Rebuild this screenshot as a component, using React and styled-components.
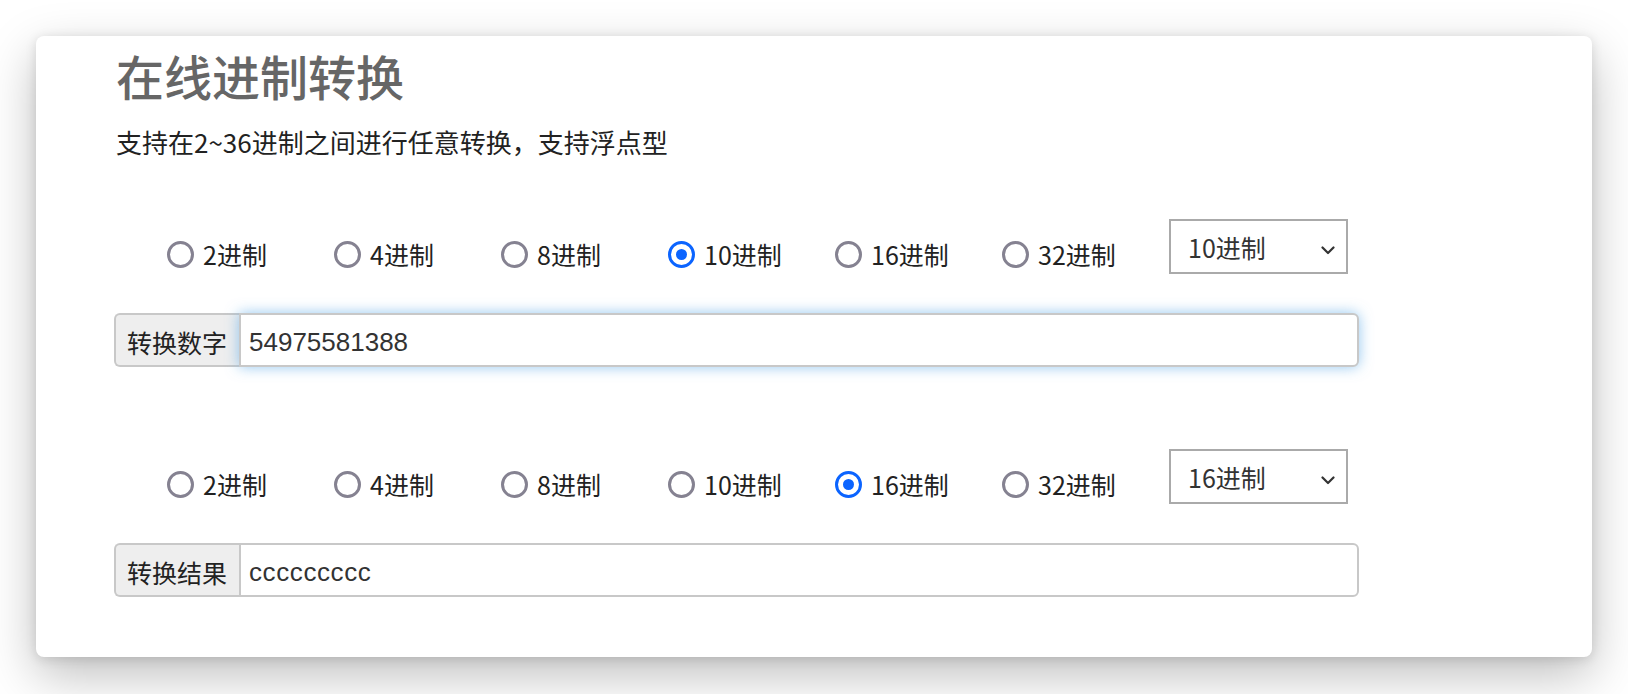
import styled, { createGlobalStyle } from "styled-components";

const GlobalStyle = createGlobalStyle`
  html, body {
    margin: 0;
    padding: 0;
    background: #ffffff;
  }
  body {
    font-family: "Noto Sans CJK SC", "Liberation Sans", sans-serif;
    color: #333;
  }
  * { box-sizing: border-box; }
`;

const Page = styled.div`
  padding: 36px;
  height: 694px;
`;

const Card = styled.div`
  background: #fff;
  border-radius: 8px;
  height: 621px;
  padding: 10px 78px 0;
  box-shadow: 0 18px 50px rgba(0, 0, 0, 0.26), 0 2px 12px rgba(0, 0, 0, 0.12);
`;

const Title = styled.h1`
  margin: 0;
  padding-left: 2px;
  font-size: 48px;
  line-height: 58px;
  font-weight: 500;
  color: #666;
`;

const Subtitle = styled.p`
  margin: 20px 0 0;
  padding-left: 2px;
  font-size: 26px;
  line-height: 36px;
  color: #222;
`;

const Section = styled.div`
  margin-top: ${(p) => p.$top}px;
`;

const RadioRow = styled.div`
  display: grid;
  grid-template-columns: repeat(6, 167px) 179px;
  align-items: center;
  padding-left: 53px;
  height: 55px;
`;

const RadioOption = styled.label`
  display: flex;
  align-items: center;
  gap: 9px;
  margin-top: 15px;
  font-size: 25px;
  line-height: 36px;
  color: #222;
  cursor: pointer;
`;

const Radio = styled.input.attrs({ type: "radio" })`
  appearance: none;
  margin: 0;
  width: 27px;
  height: 27px;
  border-radius: 50%;
  border: 3.5px solid ${(p) => (p.checked ? "#0b64ff" : "#858291")};
  background: #fff;
  display: grid;
  place-items: center;
  flex-shrink: 0;

  &::after {
    content: "";
    width: 11px;
    height: 11px;
    border-radius: 50%;
    background: ${(p) => (p.checked ? "#0b64ff" : "transparent")};
  }
`;

const SelectBox = styled.div`
  height: 55px;
  border: 2px solid #aaa;
  display: flex;
  align-items: center;
  justify-content: space-between;
  padding: 0 11px 0 17px;
  font-size: 25px;
  color: #333;
  background: #fff;

  svg {
    margin-top: 8px;
  }
`;

const InputGroup = styled.div`
  display: flex;
  width: 1245px;
  height: 54px;
  margin-top: 39px;
`;

const Addon = styled.span`
  display: flex;
  align-items: center;
  padding: 3px 12px 0 11px;
  background: #eee;
  border: 2px solid #c8c8c8;
  border-right: 0;
  border-radius: 6px 0 0 6px;
  font-size: 25px;
  color: #222;
  white-space: nowrap;
`;

const Field = styled.div`
  flex: 1;
  display: flex;
  align-items: center;
  padding: 4px 8px 0;
  border: 2px solid #c8c8c8;
  border-radius: 0 6px 6px 0;
  font-family: "Liberation Sans", "Noto Sans CJK SC", sans-serif;
  font-size: 26px;
  letter-spacing: ${(p) => p.$spacing || 0}px;
  color: #333;
  background: #fff;
  box-shadow: ${(p) =>
    p.$focus ? "0 0 14px rgba(102, 175, 233, 0.7)" : "none"};
`;

const bases = [2, 4, 8, 10, 16, 32];

const Chevron = () => (
  <svg width="14" height="9" viewBox="0 0 14 9" fill="none">
    <path d="M1.5 1.5 L7 7 L12.5 1.5" stroke="#333" strokeWidth="2.2" strokeLinecap="round" strokeLinejoin="round" />
  </svg>
);

const BaseRow = ({ name, value }) => (
  <RadioRow>
    {bases.map((b) => (
      <RadioOption key={b}>
        <Radio name={name} checked={b === value} readOnly />
        {b}进制
      </RadioOption>
    ))}
    <SelectBox>
      <span>{value}进制</span>
      <Chevron />
    </SelectBox>
  </RadioRow>
);

export default function App() {
  return (
    <Page>
      <GlobalStyle />
      <Card>
        <Title>在线进制转换</Title>
        <Subtitle>支持在2~36进制之间进行任意转换，支持浮点型</Subtitle>
        <Section $top={59}>
          <BaseRow name="from" value={10} />
          <InputGroup>
            <Addon>转换数字</Addon>
            <Field $focus>54975581388</Field>
          </InputGroup>
        </Section>
        <Section $top={82}>
          <BaseRow name="to" value={16} />
          <InputGroup>
            <Addon>转换结果</Addon>
            <Field $spacing={0.6}>ccccccccc</Field>
          </InputGroup>
        </Section>
      </Card>
    </Page>
  );
}
